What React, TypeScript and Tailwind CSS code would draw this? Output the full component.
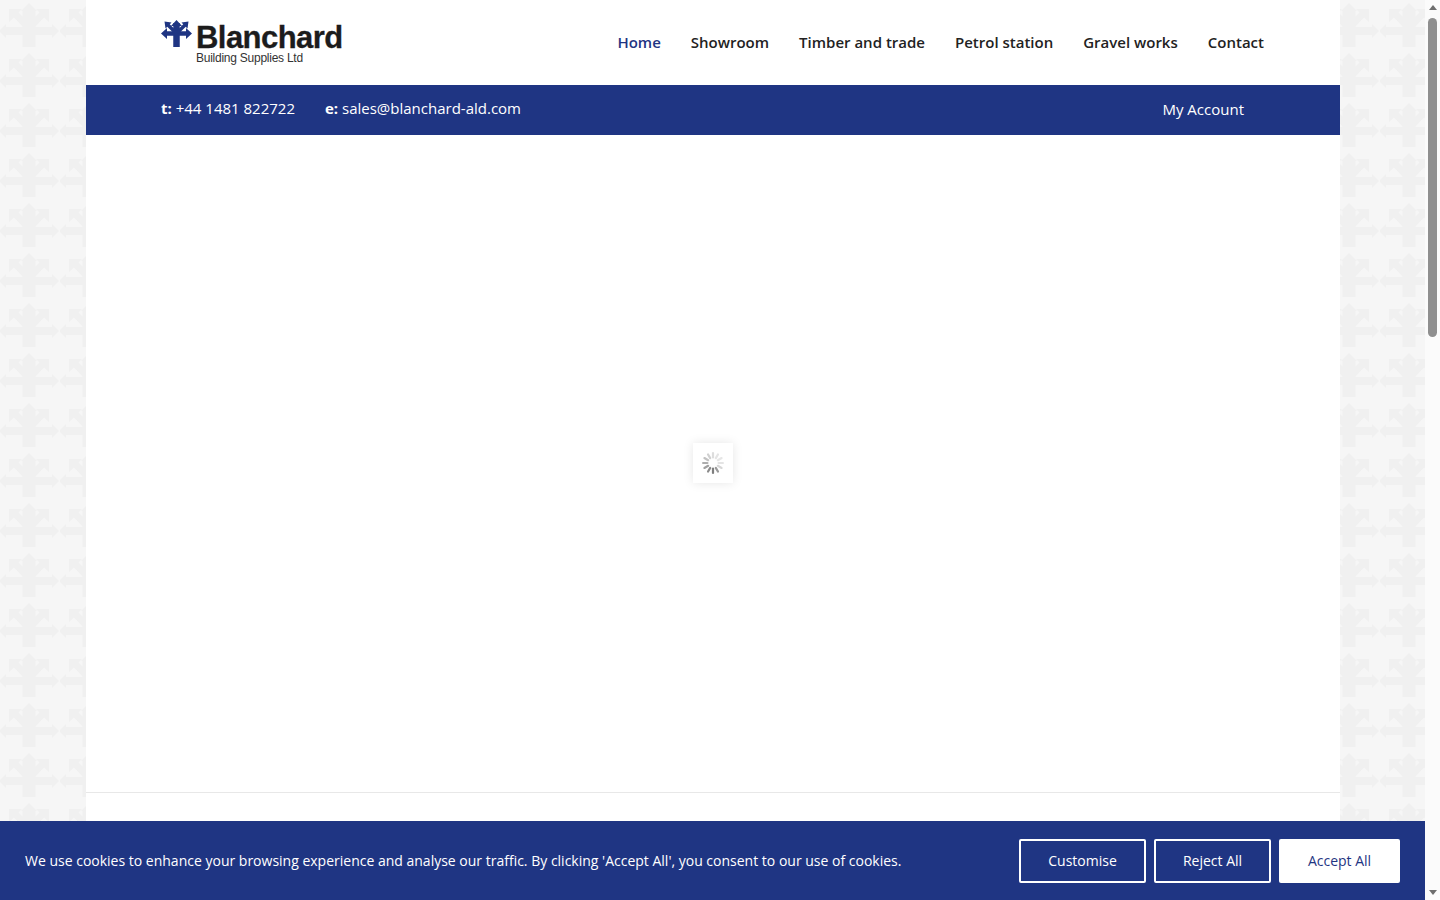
import React from 'react';

const navLinks = ['Home', 'Showroom', 'Timber and trade', 'Petrol station', 'Gravel works', 'Contact'];

// faint arrow-cross tile used on the page background
const Backdrop = () => (
  <svg className="absolute inset-0 h-full w-full" aria-hidden="true">
    <defs>
      <pattern id="tile" x="0" y="0" width="60" height="50" patternUnits="userSpaceOnUse">
        <g fill="#f0f0f0">
          <path d="M29 3l8 8h-1.500v36h-13V11H21z" />
          <path d="M5 27h48v8H5z" />
          <path d="M-1 31l7-7v14zM59 31l-7-7v14z" />
          <path d="M9 9h13l-3.500 3.500L29 23l-4 6-11-11.500L9 22zM49 9H36l3.500 3.500L29 23l4 6 11-11.500L49 22z" />
        </g>
      </pattern>
    </defs>
    <rect width="100%" height="100%" fill="#f6f6f6" />
    <rect width="100%" height="100%" fill="url(#tile)" />
  </svg>
);

const Logo = () => (
  <div className="relative h-[50px] w-[182px]">
    <svg className="absolute left-0 top-[2px]" width="32" height="28" viewBox="0 0 32 28">
      <g fill="#1f3583" stroke="#1f3583">
        <path d="M15.500 3v24" strokeWidth="6.500" />
        <path d="M4 13.500h23" strokeWidth="4.500" />
        <path d="M15 13L7 5M16 13l8-8" strokeWidth="3.500" />
        <path stroke="none" d="M15.500 0L21 6H10zM0 13.500L6 8v11zM31 13.500L25 8v11zM3.500 1.500L10.500 2.500 4.500 8.500zM27.500 1.500L20.500 2.500 26.500 8.500z" />
      </g>
    </svg>
    <span className="absolute left-[35px] top-[6px] text-[31px] font-bold leading-[28px] tracking-[-0.55px] text-[#1c1c1c] [-webkit-text-stroke:0.3px_#1c1c1c] [font-family:'Liberation_Sans',sans-serif]">
      Blanchard
    </span>
    <span className="absolute left-[35px] top-[34px] text-[12px] leading-[12px] tracking-[-0.25px] text-[#333333] [font-family:'Liberation_Sans',sans-serif]">
      Building Supplies Ltd
    </span>
  </div>
);

const Spinner = () => (
  <svg width="24" height="24" viewBox="0 0 24 24">
    {Array.from({ length: 12 }).map((_, i) => (
      <rect
        key={i}
        x="10.900"
        y="1"
        width="2.200"
        height="6.500"
        rx="1.100"
        fill="#777777"
        opacity={[0.25, 0.2, 0.18, 0.2, 0.3, 0.75, 0.95, 0.85, 0.7, 0.6, 0.45, 0.35][i]}
        transform={`rotate(${i * 30} 12 12)`}
      />
    ))}
  </svg>
);

const Scrollbar = () => (
  <div className="flex w-[15px] shrink-0 flex-col items-center bg-[#fbfbfb]">
    <div className="mt-[5px] h-0 w-0 border-x-[4.5px] border-b-[5px] border-x-transparent border-b-[#6e6e6e]" />
    <div className="mt-[8px] h-[319px] w-[9px] rounded-full bg-[#8f8f8f]" />
    <div className="mt-auto mb-[5px] h-0 w-0 border-x-[4.5px] border-t-[5px] border-x-transparent border-t-[#6e6e6e]" />
  </div>
);

export default function App() {
  return (
    <div className="flex h-screen w-full overflow-hidden [font-family:'Open_Sans',sans-serif]">
      <div className="relative h-full flex-1 overflow-hidden">
        <Backdrop />
        <div className="relative mx-[86px] mr-[85px] flex h-full w-[1254px] flex-col bg-white">
          <header className="flex h-[85px] items-start justify-between pl-[75px] pr-[76px]">
            <div className="pt-[18px]">
              <Logo />
            </div>
            <nav className="flex gap-[30px] pt-[32px] text-[15px] font-semibold leading-[21px] text-[#222222]">
              {navLinks.map((link, i) => (
                <a key={link} href="#" className={i === 0 ? 'text-[#1f3583]' : ''}>
                  {link}
                </a>
              ))}
            </nav>
          </header>

          <div className="flex h-[50px] items-center justify-between bg-[#1f3583] pl-[75px] pr-[96px] text-[15px] text-white">
            <div className="flex gap-[30px] pb-[4px]">
              <span>
                <b className="font-bold">t:</b> +44 1481 822722
              </span>
              <span>
                <b className="font-bold">e:</b> sales@blanchard-ald.com
              </span>
            </div>
            <a href="#" className="pb-[2px]">My Account</a>
          </div>

          <main className="flex h-[658px] items-center justify-center border-b border-[#e8e8e8] pb-[1px]">
            <div className="flex h-10 w-10 items-center justify-center bg-white shadow-[0_0_10px_rgba(0,0,0,0.1)]">
              <Spinner />
            </div>
          </main>
        </div>

        <div className="absolute inset-x-0 bottom-0 flex h-[79px] items-center justify-between bg-[#1f3583] pl-[25px] pr-[25px] text-[14px] text-white">
          <p>We use cookies to enhance your browsing experience and analyse our traffic. By clicking 'Accept All', you consent to our use of cookies.</p>
          <div className="flex gap-2">
            <button className="h-11 w-[127px] rounded-[2px] border-2 border-white">Customise</button>
            <button className="h-11 w-[117px] rounded-[2px] border-2 border-white">Reject All</button>
            <button className="h-11 w-[121px] rounded-[2px] bg-white text-[#1f3583]">Accept All</button>
          </div>
        </div>
      </div>
      <Scrollbar />
    </div>
  );
}
